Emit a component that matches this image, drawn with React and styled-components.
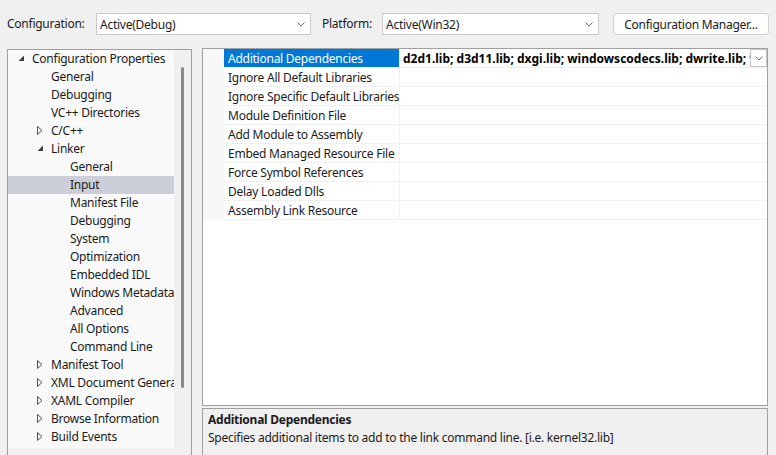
import React from "react";
import styled, { createGlobalStyle } from "styled-components";

const Global = createGlobalStyle`
  html, body { margin: 0; padding: 0; background: #f0f0f0; }
  body { font-family: "Noto Sans", "Open Sans", sans-serif; font-size: 12px; letter-spacing: -0.25px; color: #1b1b1b; }
  * { box-sizing: border-box; }
`;

const Page = styled.div`
  width: 776px;
  height: 455px;
  overflow: hidden;
  background: #f0f0f0;
`;

const Toolbar = styled.div`
  display: flex;
  align-items: center;
  height: 35px;
  padding: 13px 0 0 7px;
`;

const Label = styled.span`
  width: ${(p) => p.$w}px;
  margin-left: ${(p) => p.$ml || 0}px;
  white-space: nowrap;
  line-height: 22px;
`;

const Select = styled.div`
  width: ${(p) => p.$w}px;
  height: 22px;
  background: #fff;
  border: 1px solid #c9c9c9;
  display: flex;
  align-items: center;
  justify-content: space-between;
  padding: 0 5px 0 3px;
  white-space: nowrap;
`;

const Button = styled.div`
  margin-left: 14px;
  width: 156px;
  height: 22px;
  background: #fdfdfd;
  border: 1px solid #cfcfcf;
  border-radius: 3px;
  display: flex;
  align-items: center;
  justify-content: center;
  white-space: nowrap;
`;

const Main = styled.div`
  display: flex;
  align-items: flex-start;
  gap: 10px;
  padding: 13px 0 0 7px;
`;

const TreePanel = styled.div`
  width: 185px;
  height: 420px;
  margin-top: 1px;
  border: 1px solid #a0a0a0;
  background: #f0f0f0;
  display: flex;
  align-items: flex-start;
`;

const TreeList = styled.div`
  width: 166px;
  height: 398px;
  background: #f9f9f9;
  display: flex;
  flex-direction: column;
`;

const VScroll = styled.div`
  flex: 1;
  height: 398px;
  display: flex;
  justify-content: center;
  padding-top: 17px;
`;

const Thumb = styled.div`
  width: 3px;
  height: 321px;
  border-radius: 2px;
  background: #8a8a8a;
`;

const TreeRow = styled.div`
  height: 18px;
  display: flex;
  align-items: center;
  padding-left: ${(p) => 10 + p.$level * 19}px;
  padding-bottom: 2px;
  background: ${(p) => (p.$selected ? "#cccfda" : "transparent")};
  white-space: nowrap;
  overflow: hidden;
`;

const Expander = styled.span`
  width: 14px;
  flex: none;
  display: flex;
  align-items: center;
`;

const RightCol = styled.div`
  width: 566px;
  display: flex;
  flex-direction: column;
  gap: 2px;
`;

const Grid = styled.div`
  height: 358px;
  border: 1px solid #a0a0a0;
  background: #fff;
  display: flex;
  flex-direction: column;
`;

const GridRow = styled.div`
  display: flex;
  height: 19px;
`;

const MarginCell = styled.div`
  width: 21px;
  flex: none;
  background: #f7f7f7;
`;

const NameCell = styled.div`
  width: 176px;
  flex: none;
  padding-left: 4px;
  display: flex;
  align-items: center;
  white-space: nowrap;
  overflow: hidden;
  border-right: 1px solid #f0f0f0;
  border-bottom: 1px solid #f0f0f0;
  background: ${(p) => (p.$selected ? "#0078d7" : "#fff")};
  color: ${(p) => (p.$selected ? "#fff" : "#1b1b1b")};
`;

const ValueCell = styled.div`
  flex: 1;
  min-width: 0;
  display: flex;
  align-items: center;
  border-bottom: 1px solid #f0f0f0;
`;

const ValueText = styled.span`
  flex: 1;
  min-width: 0;
  padding-left: 3px;
  font-weight: bold;
  letter-spacing: 0;
  color: #000;
  white-space: nowrap;
  overflow: hidden;
`;

const DropBtn = styled.div`
  width: 17px;
  height: 18px;
  flex: none;
  border: 1px solid #c4c4c4;
  background: #fff;
  display: flex;
  align-items: center;
  justify-content: center;
`;

const Description = styled.div`
  height: 60px;
  border: 1px solid #a0a0a0;
  background: #f0f0f0;
  padding: 2px 5px;
  line-height: 18px;
`;

const DescTitle = styled.div`
  font-weight: bold;
`;

const Chevron = () => (
  <svg width="8" height="5" viewBox="0 0 8 5">
    <path d="M0.5 0.5 L4 4 L7.5 0.5" fill="none" stroke="#6a6a6a" strokeWidth="1" />
  </svg>
);

const Expanded = () => (
  <svg width="7" height="7" viewBox="0 0 7 7">
    <polygon points="6,0.5 6,6 0.5,6" fill="#404040" />
  </svg>
);

const Collapsed = () => (
  <svg width="6" height="9" viewBox="0 0 6 9">
    <polygon points="0.5,0.5 5,4.5 0.5,8.5" fill="none" stroke="#505050" strokeWidth="1" />
  </svg>
);

const tree = [
  { t: "Configuration Properties", l: 0, e: "open" },
  { t: "General", l: 1 },
  { t: "Debugging", l: 1 },
  { t: "VC++ Directories", l: 1 },
  { t: "C/C++", l: 1, e: "closed" },
  { t: "Linker", l: 1, e: "open" },
  { t: "General", l: 2 },
  { t: "Input", l: 2, s: true },
  { t: "Manifest File", l: 2 },
  { t: "Debugging", l: 2 },
  { t: "System", l: 2 },
  { t: "Optimization", l: 2 },
  { t: "Embedded IDL", l: 2 },
  { t: "Windows Metadata", l: 2 },
  { t: "Advanced", l: 2 },
  { t: "All Options", l: 2 },
  { t: "Command Line", l: 2 },
  { t: "Manifest Tool", l: 1, e: "closed" },
  { t: "XML Document Generator", l: 1, e: "closed" },
  { t: "XAML Compiler", l: 1, e: "closed" },
  { t: "Browse Information", l: 1, e: "closed" },
  { t: "Build Events", l: 1, e: "closed" },
];

const props = [
  "Additional Dependencies",
  "Ignore All Default Libraries",
  "Ignore Specific Default Libraries",
  "Module Definition File",
  "Add Module to Assembly",
  "Embed Managed Resource File",
  "Force Symbol References",
  "Delay Loaded Dlls",
  "Assembly Link Resource",
];

export default function App() {
  return (
    <Page>
      <Global />
      <Toolbar>
        <Label $w={89}>Configuration:</Label>
        <Select $w={215}>
          <span>Active(Debug)</span>
          <Chevron />
        </Select>
        <Label $w={60} $ml={11}>Platform:</Label>
        <Select $w={217}>
          <span>Active(Win32)</span>
          <Chevron />
        </Select>
        <Button>Configuration Manager...</Button>
      </Toolbar>
      <Main>
        <TreePanel>
          <TreeList>
            {tree.map((r, i) => (
              <TreeRow key={i} $level={r.l} $selected={r.s}>
                <Expander>
                  {r.e === "open" ? <Expanded /> : r.e === "closed" ? <Collapsed /> : null}
                </Expander>
                {r.t}
              </TreeRow>
            ))}
          </TreeList>
          <VScroll>
            <Thumb />
          </VScroll>
        </TreePanel>
        <RightCol>
          <Grid>
            {props.map((p, i) => (
              <GridRow key={i}>
                <MarginCell />
                <NameCell $selected={i === 0}>{p}</NameCell>
                <ValueCell>
                  {i === 0 && (
                    <>
                      <ValueText>
                        d2d1.lib; d3d11.lib; dxgi.lib; windowscodecs.lib; dwrite.lib; 9.lib;%(AdditionalDependencies)
                      </ValueText>
                      <DropBtn>
                        <Chevron />
                      </DropBtn>
                    </>
                  )}
                </ValueCell>
              </GridRow>
            ))}
          </Grid>
          <Description>
            <DescTitle>Additional Dependencies</DescTitle>
            <div>Specifies additional items to add to the link command line. [i.e. kernel32.lib]</div>
          </Description>
        </RightCol>
      </Main>
    </Page>
  );
}
